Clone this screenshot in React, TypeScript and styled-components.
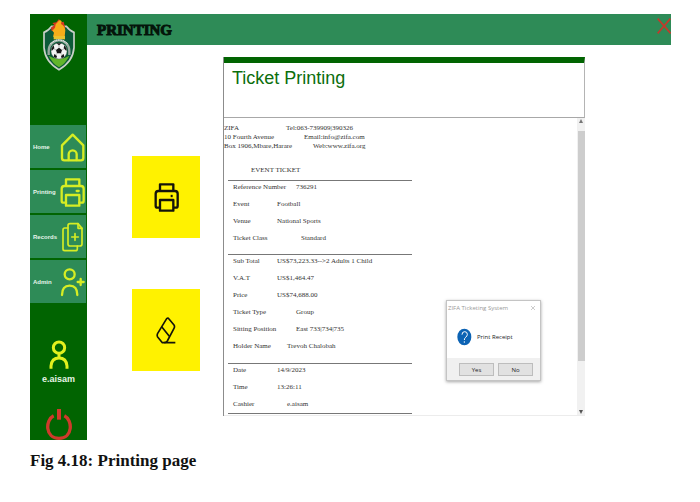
import React from "react";
import styled, { createGlobalStyle } from "styled-components";

const GlobalStyle = createGlobalStyle`
  *, *::before, *::after { box-sizing: border-box; }
  body { margin: 0; background: #fff; font-family: "Liberation Sans", Arial, sans-serif; }
  button { font: inherit; color: inherit; border: 0; padding: 0; background: none; cursor: pointer; }
  svg { display: block; flex: none; }
`;

const Figure = styled.figure`
  margin: 0;
  padding: 14px 29px 0 30px;
`;

const Caption = styled.figcaption`
  margin-top: 11px;
  font: bold 17px/20px "Liberation Serif", "Times New Roman", serif;
  color: #111;
`;

const Window = styled.div`
  display: flex;
`;

const Sidebar = styled.aside`
  flex: 0 0 57px;
  display: flex;
  flex-direction: column;
  align-items: center;
  padding-top: 4px;
  background: #016401;
`;

const Nav = styled.nav`
  align-self: stretch;
  display: flex;
  flex-direction: column;
  gap: 2px;
  margin: 54px 1px 37px 0;
`;

const NavLink = styled.a`
  display: flex;
  align-items: center;
  justify-content: space-between;
  height: 43px;
  padding: 0 1px 0 3px;
  background: #2e8b57;
  color: #e6f5ea;
  font-size: 6px;
  font-weight: bold;
  text-decoration: none;
`;

const UserName = styled.span`
  margin: 4px 0 24px;
  color: #e6f5e6;
  font-size: 9px;
  line-height: 10px;
  font-weight: bold;
`;

const Main = styled.main`
  flex: 1;
  min-width: 0;
`;

const TopBar = styled.header`
  display: flex;
  align-items: center;
  justify-content: space-between;
  height: 31px;
  padding-left: 10px;
  background: #2e8b57;
`;

const PageTitle = styled.h1`
  margin: 0;
  font: 900 15px/20px "Liberation Serif", serif;
  color: #04140a;
  -webkit-text-stroke: 1px #04140a;
`;

const CloseButton = styled.button`
  align-self: flex-start;
  padding-top: 4px;
`;

const Content = styled.div`
  display: flex;
  align-items: flex-start;
  gap: 23px;
  padding: 12px 86px 0 45px;
`;

const Actions = styled.div`
  flex: 0 0 68px;
  display: flex;
  flex-direction: column;
  gap: 51px;
  padding-top: 99px;
`;

const ActionButton = styled.button`
  display: flex;
  align-items: center;
  justify-content: center;
  height: 82px;
  background: #fff200;
`;

const Panel = styled.section`
  position: relative;
  flex: 1;
  min-width: 0;
  border-left: 1px solid #8c8c8c;
`;

const PanelHeader = styled.div`
  height: 61px;
  padding: 5px 8px 0;
  border-top: 6px solid #016401;
  border-right: 1px solid #b4b4b4;
  border-bottom: 1px solid #a8a8a8;
`;

const PanelTitle = styled.h2`
  margin: 0;
  font-size: 18px;
  line-height: 20px;
  font-weight: normal;
  color: #0c6e0c;
`;

const Viewer = styled.div`
  display: flex;
  justify-content: space-between;
  border-bottom: 1px solid #ececec;
`;

const Slip = styled.article`
  width: 188px;
  padding: 6px 0 1px;
  font: 7px/8px "Liberation Serif", "Times New Roman", serif;
  color: #333;
  white-space: nowrap;
`;

const Letterhead = styled.div`
  display: grid;
  row-gap: 1px;
  margin-bottom: 16px;
`;

const Line = styled.div<{ $label: number }>`
  display: grid;
  grid-template-columns: ${(p) => p.$label}px 1fr;
`;

const Value = styled.span<{ $indent?: number }>`
  padding-left: ${(p) => p.$indent ?? 0}px;
`;

const SlipTitle = styled.h3`
  margin: 0 0 6px 27px;
  font: inherit;
`;

const Group = styled.div<{ $end: number }>`
  display: grid;
  row-gap: 9px;
  margin-left: 4px;
  padding: 2px 0 ${(p) => p.$end}px 5px;
  border-top: 1px solid #777;
`;

const Rule = styled.hr`
  margin: 0 0 0 4px;
  border: 0;
  border-top: 1px solid #777;
`;

const ScrollTrack = styled.div`
  display: flex;
  flex-direction: column;
  align-items: center;
  justify-content: space-between;
  width: 8px;
  padding: 1px 0;
  background: #f1f1f1;
`;

const ScrollThumb = styled.div`
  width: 7px;
  height: 230px;
  margin: 8px 0 auto;
  background: #cdcdcd;
`;

const Dialog = styled.div`
  position: absolute;
  right: 44px;
  bottom: 35px;
  width: 95px;
  border: 1px solid #c4c4c4;
  background: #fff;
  box-shadow: 0 1px 3px rgba(0, 0, 0, 0.35);
  font-family: "Open Sans", "Noto Sans", sans-serif;
  font-size: 6px;
`;

const DialogTitle = styled.div`
  display: flex;
  align-items: center;
  justify-content: space-between;
  height: 14px;
  padding: 0 5px 0 1px;
  color: #999;
`;

const DialogBody = styled.div`
  display: flex;
  align-items: center;
  gap: 5px;
  height: 43px;
  padding: 0 10px;
  color: #222;
`;

const DialogFooter = styled.div`
  display: flex;
  justify-content: flex-end;
  gap: 4px;
  padding: 5px 7px 4px;
  background: #f0f0f0;
`;

const DialogButton = styled.button`
  width: 35px;
  height: 13px;
  border: 1px solid #bdbdbd;
  background: #e1e1e1;
  color: #222;
  line-height: 8px;
`;

const Crest = () => (
  <svg width="32" height="53" viewBox="0 0 96 157" role="img" aria-label="ZIFA">
    <path d="M3 42Q16 38 26 24H70Q80 38 93 42V88Q90 130 48 154Q6 130 3 88Z" fill="#0c5a38" stroke="#c9d0c8" strokeWidth="5" />
    <path d="M17 112Q48 132 79 112Q68 135 48 147Q28 135 17 112Z" fill="#62b52b" />
    <path d="M24 28L34 20L28 14L40 12L48 2L54 12L62 10L66 26V38H26Z" fill="#d83a20" />
    <path d="M45 10q6-8 11-1l-2 8q10 5 13 18l-2 20H30l3-12-5-6 8-9 2-10Z" fill="#f6ad19" />
    <path d="M32 53h34v10H32Z" fill="#e9c22f" />
    <path d="M17 110V97a31 31 0 0 1 62 0v13" fill="none" stroke="#98aaa0" strokeWidth="7" />
    <path d="M23 77a32 32 0 0 1 50 0" fill="none" stroke="#e8eee9" strokeWidth="4" strokeDasharray="3 2" />
    <circle cx="48" cy="98" r="24" fill="#f3f3f3" stroke="#555" strokeWidth="1" />
    <g fill="#151515">
      <path d="M48 88l9 7-3 10H42l-3-10Z" />
      <path d="M40 75h16l-8 6ZM25 91l7-10 2 9-8 8ZM71 91l-7-10-2 9 8 8ZM32 115l2-8 8 6-2 7ZM64 115l-2-8-8 6 2 7Z" />
    </g>
    <g stroke="#777" strokeWidth="1.5">
      <path d="M48 88v-8M57 95l7-4M54 105l5 6M42 105l-5 6M39 95l-7-4" />
    </g>
  </svg>
);

const NavIcon = ({ width = 7, children }: { width?: number; children: React.ReactNode }) => (
  <svg width="25" height="30" viewBox="0 0 75 90" fill="none" stroke="#d6ed24" strokeWidth={width} strokeLinejoin="round" strokeLinecap="round" aria-hidden="true">
    {children}
  </svg>
);

const HomeIcon = () => (
  <NavIcon>
    <path d="M38 8L6 40V78q0 7 7 7H63q7 0 7-7V40Z" />
    <path d="M26 84V67a12 12 0 0 1 24 0V84" />
  </NavIcon>
);

const printerPaths = (
  <>
    <path d="M18 26V7H58V26" />
    <path d="M18 77H11q-6 0-6-6V35q0-8 8-8H63q8 0 8 8V71q0 6-6 6H58" />
    <path d="M18 54H58V86H18Z" />
    <path d="M50 42h6" />
  </>
);

const RecordsIcon = () => (
  <NavIcon width={5}>
    <path d="M24 18H14q-5 0-5 5V81q0 5 5 5H46q6 0 6-6V72" />
    <path d="M30 5H54L66 19V66q0 6-6 6H30q-6 0-6-6V11q0-6 6-6Z" />
    <path d="M54 5V19H66M45 35V55M35 45H55" />
  </NavIcon>
);

const AdminIcon = () => (
  <NavIcon>
    <circle cx="29" cy="22" r="15" />
    <path d="M6 84C6 66 15 56 29 56S52 66 52 84" />
    <path d="M62 36V54M53 45H71" />
  </NavIcon>
);

const PersonIcon = () => (
  <svg width="20" height="30" viewBox="0 0 60 90" fill="none" stroke="#e2f01e" strokeWidth="9" aria-hidden="true">
    <circle cx="30" cy="23" r="17" />
    <path d="M6 86V78Q8 54 30 54T54 78V86" />
    <path d="M30 40V54" />
  </svg>
);

const PowerIcon = () => (
  <svg width="26" height="32" viewBox="0 0 78 96" fill="none" stroke="#cf3a2b" strokeWidth="10" aria-hidden="true">
    <path d="M23 23C-3 36-3 91 39 91S81 36 55 23" />
    <path d="M39 3V35" strokeWidth="12" />
  </svg>
);

const PrinterIcon = () => (
  <svg width="25" height="30" viewBox="0 0 75 90" fill="none" stroke="#14140a" strokeWidth="7" strokeLinejoin="round" aria-hidden="true">
    {printerPaths}
  </svg>
);

const EraserIcon = () => (
  <svg width="20" height="27" viewBox="0 0 60 81" fill="none" stroke="#14140a" strokeWidth="5" strokeLinejoin="round" aria-hidden="true">
    <path d="M32 5Q36 2 39 6L54 24Q57 29 54 34L34 72Q31 77 25 77H19L5 60Q2 55 5 49Z" />
    <path d="M17 29L40 58M25 77H58" />
  </svg>
);

const QuestionIcon = () => (
  <svg width="15" height="18" viewBox="0 0 45 54" aria-hidden="true">
    <ellipse cx="22" cy="27" rx="21" ry="25" fill="#0c63b4" />
    <path d="M15 20q0-9 8-9t8 8q0 5-5 9-4 3-4 8" fill="none" stroke="#fff" strokeWidth="3" />
    <circle cx="22" cy="42" r="2" fill="#fff" />
  </svg>
);

const navItems = [
  { label: "Home", icon: <HomeIcon /> },
  { label: "Printing", icon: <NavIcon>{printerPaths}</NavIcon> },
  { label: "Records", icon: <RecordsIcon /> },
  { label: "Admin", icon: <AdminIcon /> },
];

type Entry = [label: string, value: string, indent?: number];

const letterhead: Entry[] = [
  ["ZIFA", "Tel:063-739909|390326"],
  ["10 Fourth Avenue", "Email:info@zifa.com", 18],
  ["Box 1906,Mbare,Harare", "Web:www.zifa.org", 27],
];

const groups: { end: number; entries: Entry[] }[] = [
  {
    end: 12,
    entries: [
      ["Reference Number", "736291", 19],
      ["Event", "Football"],
      ["Venue", "National Sports"],
      ["Ticket Class", "Standard", 24],
    ],
  },
  {
    end: 13,
    entries: [
      ["Sub Total", "US$73,223.33-->2 Adults 1 Child"],
      ["V.A.T", "US$1,464.47"],
      ["Price", "US$74,688.00"],
      ["Ticket Type", "Group", 19],
      ["Sitting Position", "East 733|734|735", 19],
      ["Holder Name", "Trevoh Chalobah", 10],
    ],
  },
  {
    end: 5,
    entries: [
      ["Date", "14/9/2023"],
      ["Time", "13:26:11"],
      ["Cashier", "e.aisam", 10],
    ],
  },
];

const Entries = ({ rows, label }: { rows: Entry[]; label: number }) => (
  <>
    {rows.map(([name, value, indent]) => (
      <Line key={name} $label={label}>
        <span>{name}</span>
        <Value $indent={indent}>{value}</Value>
      </Line>
    ))}
  </>
);

export default function App() {
  return (
    <Figure>
      <GlobalStyle />
      <Window>
        <Sidebar>
          <Crest />
          <Nav>
            {navItems.map((item) => (
              <NavLink key={item.label} href="#">
                {item.label}
                {item.icon}
              </NavLink>
            ))}
          </Nav>
          <PersonIcon />
          <UserName>e.aisam</UserName>
          <button type="button" aria-label="Log out">
            <PowerIcon />
          </button>
        </Sidebar>
        <Main>
          <TopBar>
            <PageTitle>PRINTING</PageTitle>
            <CloseButton type="button" aria-label="Close">
              <svg width="14" height="16" viewBox="0 0 42 48" stroke="#c23a2c" strokeWidth="5" aria-hidden="true">
                <path d="M2 2L41 46M40 2L2 46" />
              </svg>
            </CloseButton>
          </TopBar>
          <Content>
            <Actions>
              <ActionButton type="button" aria-label="Print ticket">
                <PrinterIcon />
              </ActionButton>
              <ActionButton type="button" aria-label="Clear">
                <EraserIcon />
              </ActionButton>
            </Actions>
            <Panel>
              <PanelHeader>
                <PanelTitle>Ticket Printing</PanelTitle>
              </PanelHeader>
              <Viewer>
                <Slip>
                  <Letterhead>
                    <Entries rows={letterhead} label={62} />
                  </Letterhead>
                  <SlipTitle>EVENT TICKET</SlipTitle>
                  {groups.map((group, i) => (
                    <Group key={i} $end={group.end}>
                      <Entries rows={group.entries} label={44} />
                    </Group>
                  ))}
                  <Rule />
                </Slip>
                <ScrollTrack>
                  <svg width="4" height="4" viewBox="0 0 4 4" aria-hidden="true">
                    <path d="M0 4L2 0L4 4Z" fill="#777" />
                  </svg>
                  <ScrollThumb />
                  <svg width="4" height="4" viewBox="0 0 4 4" aria-hidden="true">
                    <path d="M0 0H4L2 4Z" fill="#555" />
                  </svg>
                </ScrollTrack>
              </Viewer>
              <Dialog role="dialog" aria-label="ZIFA Ticketing System">
                <DialogTitle>
                  ZIFA Ticketing System
                  <svg width="4" height="4" viewBox="0 0 4 4" stroke="#ccc" aria-hidden="true">
                    <path d="M0 0L4 4M4 0L0 4" />
                  </svg>
                </DialogTitle>
                <DialogBody>
                  <QuestionIcon />
                  Print Receipt
                </DialogBody>
                <DialogFooter>
                  <DialogButton type="button">Yes</DialogButton>
                  <DialogButton type="button">No</DialogButton>
                </DialogFooter>
              </Dialog>
            </Panel>
          </Content>
        </Main>
      </Window>
      <Caption>Fig 4.18: Printing page</Caption>
    </Figure>
  );
}
